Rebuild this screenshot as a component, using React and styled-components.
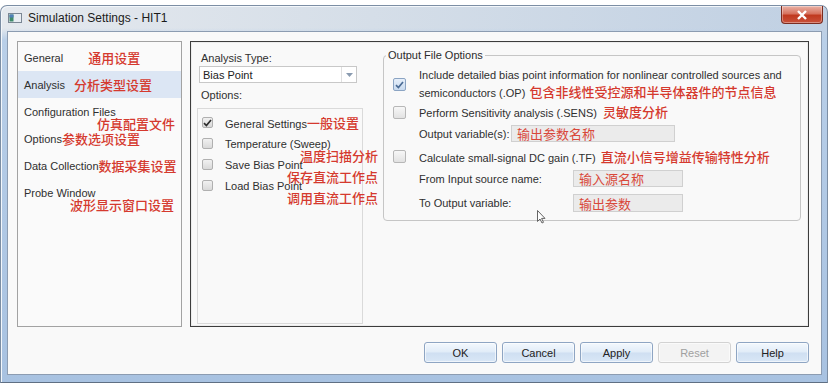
import React from 'react';
import styled, { createGlobalStyle } from 'styled-components';

const GlobalStyle = createGlobalStyle`
  html, body { margin: 0; padding: 0; background: #ffffff; }
  body {
    font-family: "Liberation Sans", Arial, sans-serif;
    font-size: 11px;
    color: #2f2f2f;
  }
  * { box-sizing: border-box; }
`;

const Page = styled.div`
  width: 829px;
  height: 389px;
  padding-top: 5px;
  overflow: hidden;
`;

const Window = styled.div`
  width: 828px;
  height: 378px;
  border: 1px solid #7c8ea4;
  border-bottom-color: #5f6f83;
  border-radius: 7px 7px 0 0;
  padding: 0 5px 7px 6px;
  display: flex;
  flex-direction: column;
  background:
    linear-gradient(180deg, rgba(185, 207, 232, 0) 0, rgba(185, 207, 232, 0) 22px, #b9cfe8 34px, #a8c2e1 100%),
    linear-gradient(90deg, #e5e9ee 0%, #d5dee8 45%, #c0d0e3 100%);
  box-shadow: inset 1px 1px 0 #f3f7fb;
`;

const TitleBar = styled.div`
  height: 25px;
  display: flex;
  align-items: flex-start;
`;

const TitleText = styled.div`
  display: flex;
  align-items: center;
  gap: 6px;
  height: 24px;
  padding-left: 1px;
  font-size: 12px;
  color: #1b1b1b;
`;

const CloseButton = styled.div`
  margin-left: auto;
  width: 42px;
  height: 18px;
  margin-right: -1px;
  border: 1px solid #7b2c20;
  border-top: none;
  border-radius: 0 0 4px 4px;
  background: linear-gradient(180deg, #eab2a6 0%, #d7735f 45%, #c0391f 55%, #c9513a 100%);
  display: flex;
  align-items: center;
  justify-content: center;
  box-shadow: inset 0 0 0 1px rgba(255, 255, 255, 0.35);
`;

const Client = styled.div`
  flex: 1;
  background: #f9f9f9;
  border: 1px solid #8c9cb1;
  padding: 9px 12px 0 9px;
  display: flex;
  flex-direction: column;
`;

const MainRow = styled.div`
  display: flex;
  gap: 8px;
  height: 286px;
`;

const NavPanel = styled.div`
  width: 165px;
  border: 1px solid #a2a2a2;
  background: #fafafa;
  padding-top: 2px;
`;

const NavItem = styled.div`
  position: relative;
  height: 27px;
  display: flex;
  align-items: center;
  padding-left: 6px;
  background: ${p => (p.$active ? '#dce6f4' : 'transparent')};
  white-space: nowrap;
`;

const Note = styled.span`
  font-family: "Noto Sans CJK SC", "Noto Sans", sans-serif;
  font-size: 13px;
  font-weight: 500;
  line-height: 17px;
  color: #d5392e;
  white-space: nowrap;
  margin-left: ${p => p.$gap || 0}px;
`;

const FloatNote = styled(Note)`
  position: absolute;
  left: ${p => p.$x}px;
  top: ${p => p.$y}px;
  margin: 0;
`;

const TabPanel = styled.div`
  flex: 1;
  border: 1px solid #3c3c3c;
  box-shadow: inset 0 0 0 1px #ececec;
  display: flex;
  gap: 20px;
  padding: 7px 7px 2px 6px;
`;

const LeftCol = styled.div`
  width: 166px;
  display: flex;
  flex-direction: column;
  padding-top: 2px;
`;

const FieldLabel = styled.div`
  line-height: 14px;
  padding-left: 4px;
  margin-top: ${p => p.$mt || 0}px;
`;

const Combo = styled.div`
  margin: 1px 0 0 2px;
  width: 158px;
  height: 17px;
  border: 1px solid #c8c8c8;
  background: #ffffff;
  display: flex;
  align-items: center;
`;

const ComboValue = styled.div`
  flex: 1;
  padding-left: 3px;
  color: #222;
`;

const ComboArrow = styled.div`
  width: 15px;
  height: 100%;
  border-left: 1px solid #e0e0e0;
  display: flex;
  align-items: center;
  justify-content: center;
`;

const OptionList = styled.div`
  flex: 1;
  margin-top: 6px;
  border: 1px solid #dadada;
  background: #f9f9f9;
  padding-top: 3px;
`;

const OptionItem = styled.div`
  position: relative;
  height: 21px;
  display: flex;
  align-items: center;
  gap: 12px;
  padding-left: 4px;
  white-space: nowrap;
`;

const SmallBox = styled.div`
  width: 11px;
  height: 11px;
  border: 1px solid #b0b0b0;
  border-radius: 2px;
  background: linear-gradient(180deg, #f1f1f1, #d9d9d9);
  display: flex;
  align-items: center;
  justify-content: center;
`;

const Group = styled.fieldset`
  position: relative;
  align-self: flex-start;
  width: 418px;
  margin: -1px 0 0 0;
  min-width: 0;
  border: 1px solid #c6c6c6;
  border-radius: 4px;
  padding: 0 8px 8px 9px;
`;

const Legend = styled.legend`
  margin-left: -7px;
  padding: 0 2px;
  line-height: 14px;
  font-size: 11px;
  color: #2b2b2b;
`;

const GroupRow = styled.div`
  height: ${p => p.$h}px;
  margin-top: ${p => p.$mt || 0}px;
  display: flex;
  align-items: center;
`;

const Box = styled.div`
  flex: none;
  width: 13px;
  height: 13px;
  border: 1px solid ${p => (p.$checked ? '#8ba4c3' : '#b7b7b7')};
  border-radius: 2px;
  background: ${p =>
    p.$checked ? 'linear-gradient(180deg, #e6effa, #c8daef)' : 'linear-gradient(180deg, #f7f7f7, #e2e2e2)'};
  display: flex;
  align-items: center;
  justify-content: center;
`;

const RowText = styled.div`
  margin-left: 13px;
  line-height: 15px;
  white-space: nowrap;
`;

const SubLabel = styled.div`
  width: ${p => p.$w}px;
  padding-left: 26px;
  white-space: nowrap;
`;

const Field = styled.div`
  width: ${p => p.$w}px;
  height: ${p => p.$h}px;
  background: #ebebeb;
  border: 1px solid #d0d0d0;
  padding-left: 5px;
  display: flex;
  align-items: center;
  font-family: "Noto Sans CJK SC", "Noto Sans", sans-serif;
  font-size: 13px;
  color: #d9483a;
`;

const Cursor = styled.svg`
  position: absolute;
  left: 153px;
  top: 148px;
`;

const ButtonRow = styled.div`
  margin-top: 15px;
  display: flex;
  justify-content: flex-end;
  gap: 5px;
`;

const Button = styled.button`
  width: 73px;
  height: 21px;
  border-radius: 3px;
  font-family: "Liberation Sans", Arial, sans-serif;
  font-size: 11px;
  padding: 0;
  border: 1px solid ${p => (p.disabled ? '#d2d2d2' : '#8ea5c3')};
  color: ${p => (p.disabled ? '#a0a0a0' : '#222')};
  background: ${p =>
    p.disabled
      ? '#f3f3f3'
      : 'linear-gradient(180deg, #f3f8fd 0%, #e1ecf8 48%, #cfdff2 52%, #d9e7f6 100%)'};
  box-shadow: inset 0 0 0 1px rgba(255, 255, 255, 0.6);
`;

const Check = ({ color = '#333' }) => (
  <svg width="9" height="8" viewBox="0 0 9 8">
    <path d="M1 4.2 L3.4 6.5 L8 1" fill="none" stroke={color} strokeWidth="1.7" />
  </svg>
);

const navItems = [
  { label: 'General', note: '通用设置', gap: 25 },
  { label: 'Analysis', note: '分析类型设置', gap: 9, active: true },
  { label: 'Configuration Files', below: '仿真配置文件', x: 79, y: 17 },
  { label: 'Options', note: '参数选项设置' },
  { label: 'Data Collection', note: '数据采集设置' },
  { label: 'Probe Window', below: '波形显示窗口设置', x: 52, y: 17 },
];

const options = [
  { label: 'General Settings', note: '一般设置', checked: true },
  { label: 'Temperature (Sweep)', below: '温度扫描分析', x: 102 },
  { label: 'Save Bias Point', below: '保存直流工作点', x: 89 },
  { label: 'Load Bias Point', below: '调用直流工作点', x: 89 },
];

export default function App() {
  return (
    <Page>
      <GlobalStyle />
      <Window>
        <TitleBar>
          <TitleText>
            <svg width="14" height="10" viewBox="0 0 14 10">
              <rect x="0.5" y="0.5" width="13" height="9" fill="#e8edf2" stroke="#7b8794" />
              <rect x="1.5" y="1.5" width="4" height="7" fill="#3f8a6a" />
              <rect x="1.5" y="1.5" width="4" height="3" fill="#4f7fb8" />
            </svg>
            Simulation Settings - HIT1
          </TitleText>
          <CloseButton>
            <svg width="12" height="10" viewBox="0 0 12 10">
              <path d="M2 1 L10 9 M10 1 L2 9" stroke="#ffffff" strokeWidth="2.4" />
            </svg>
          </CloseButton>
        </TitleBar>

        <Client>
          <MainRow>
            <NavPanel>
              {navItems.map(item => (
                <NavItem key={item.label} $active={item.active}>
                  {item.label}
                  {item.note && <Note $gap={item.gap}>{item.note}</Note>}
                  {item.below && (
                    <FloatNote $x={item.x} $y={item.y}>
                      {item.below}
                    </FloatNote>
                  )}
                </NavItem>
              ))}
            </NavPanel>

            <TabPanel>
              <LeftCol>
                <FieldLabel>Analysis Type:</FieldLabel>
                <Combo>
                  <ComboValue>Bias Point</ComboValue>
                  <ComboArrow>
                    <svg width="7" height="4" viewBox="0 0 7 4">
                      <path d="M0 0 H7 L3.5 4 Z" fill="#8a9bb0" />
                    </svg>
                  </ComboArrow>
                </Combo>
                <FieldLabel $mt={5}>Options:</FieldLabel>
                <OptionList>
                  {options.map(opt => (
                    <OptionItem key={opt.label}>
                      <SmallBox>{opt.checked && <Check color="#2e2e2e" />}</SmallBox>
                      <span>
                        {opt.label}
                        {opt.note && <Note>{opt.note}</Note>}
                      </span>
                      {opt.below && (
                        <FloatNote $x={opt.x} $y={14}>
                          {opt.below}
                        </FloatNote>
                      )}
                    </OptionItem>
                  ))}
                </OptionList>
              </LeftCol>

              <Group>
                <Legend>Output File Options</Legend>
                <GroupRow $h={31} $mt={7}>
                  <Box $checked>
                    <Check color="#4a6b95" />
                  </Box>
                  <RowText>
                    Include detailed bias point information for nonlinear controlled sources and
                    <br />
                    semiconductors (.OP)
                    <Note $gap={4}>包含非线性受控源和半导体器件的节点信息</Note>
                  </RowText>
                </GroupRow>
                <GroupRow $h={24}>
                  <Box />
                  <RowText>
                    Perform Sensitivity analysis (.SENS)
                    <Note $gap={6}>灵敏度分析</Note>
                  </RowText>
                </GroupRow>
                <GroupRow $h={19}>
                  <SubLabel $w={118}>Output variable(s):</SubLabel>
                  <Field $w={164} $h={17}>输出参数名称</Field>
                </GroupRow>
                <GroupRow $h={27}>
                  <Box />
                  <RowText>
                    Calculate small-signal DC gain (.TF)
                    <Note $gap={5}>直流小信号增益传输特性分析</Note>
                  </RowText>
                </GroupRow>
                <GroupRow $h={17}>
                  <SubLabel $w={180}>From Input source name:</SubLabel>
                  <Field $w={110} $h={17}>输入源名称</Field>
                </GroupRow>
                <GroupRow $h={18} $mt={7}>
                  <SubLabel $w={180}>To Output variable:</SubLabel>
                  <Field $w={110} $h={18}>输出参数</Field>
                </GroupRow>
                <Cursor width="9" height="14" viewBox="0 0 9 14">
                  <path d="M0.5 0.5 V11.5 L3 9 L5 13 L6.5 12.3 L4.6 8.4 H8 Z" fill="#ffffff" stroke="#555" strokeWidth="0.9" />
                </Cursor>
              </Group>
            </TabPanel>
          </MainRow>

          <ButtonRow>
            <Button>OK</Button>
            <Button>Cancel</Button>
            <Button>Apply</Button>
            <Button disabled>Reset</Button>
            <Button>Help</Button>
          </ButtonRow>
        </Client>
      </Window>
    </Page>
  );
}
